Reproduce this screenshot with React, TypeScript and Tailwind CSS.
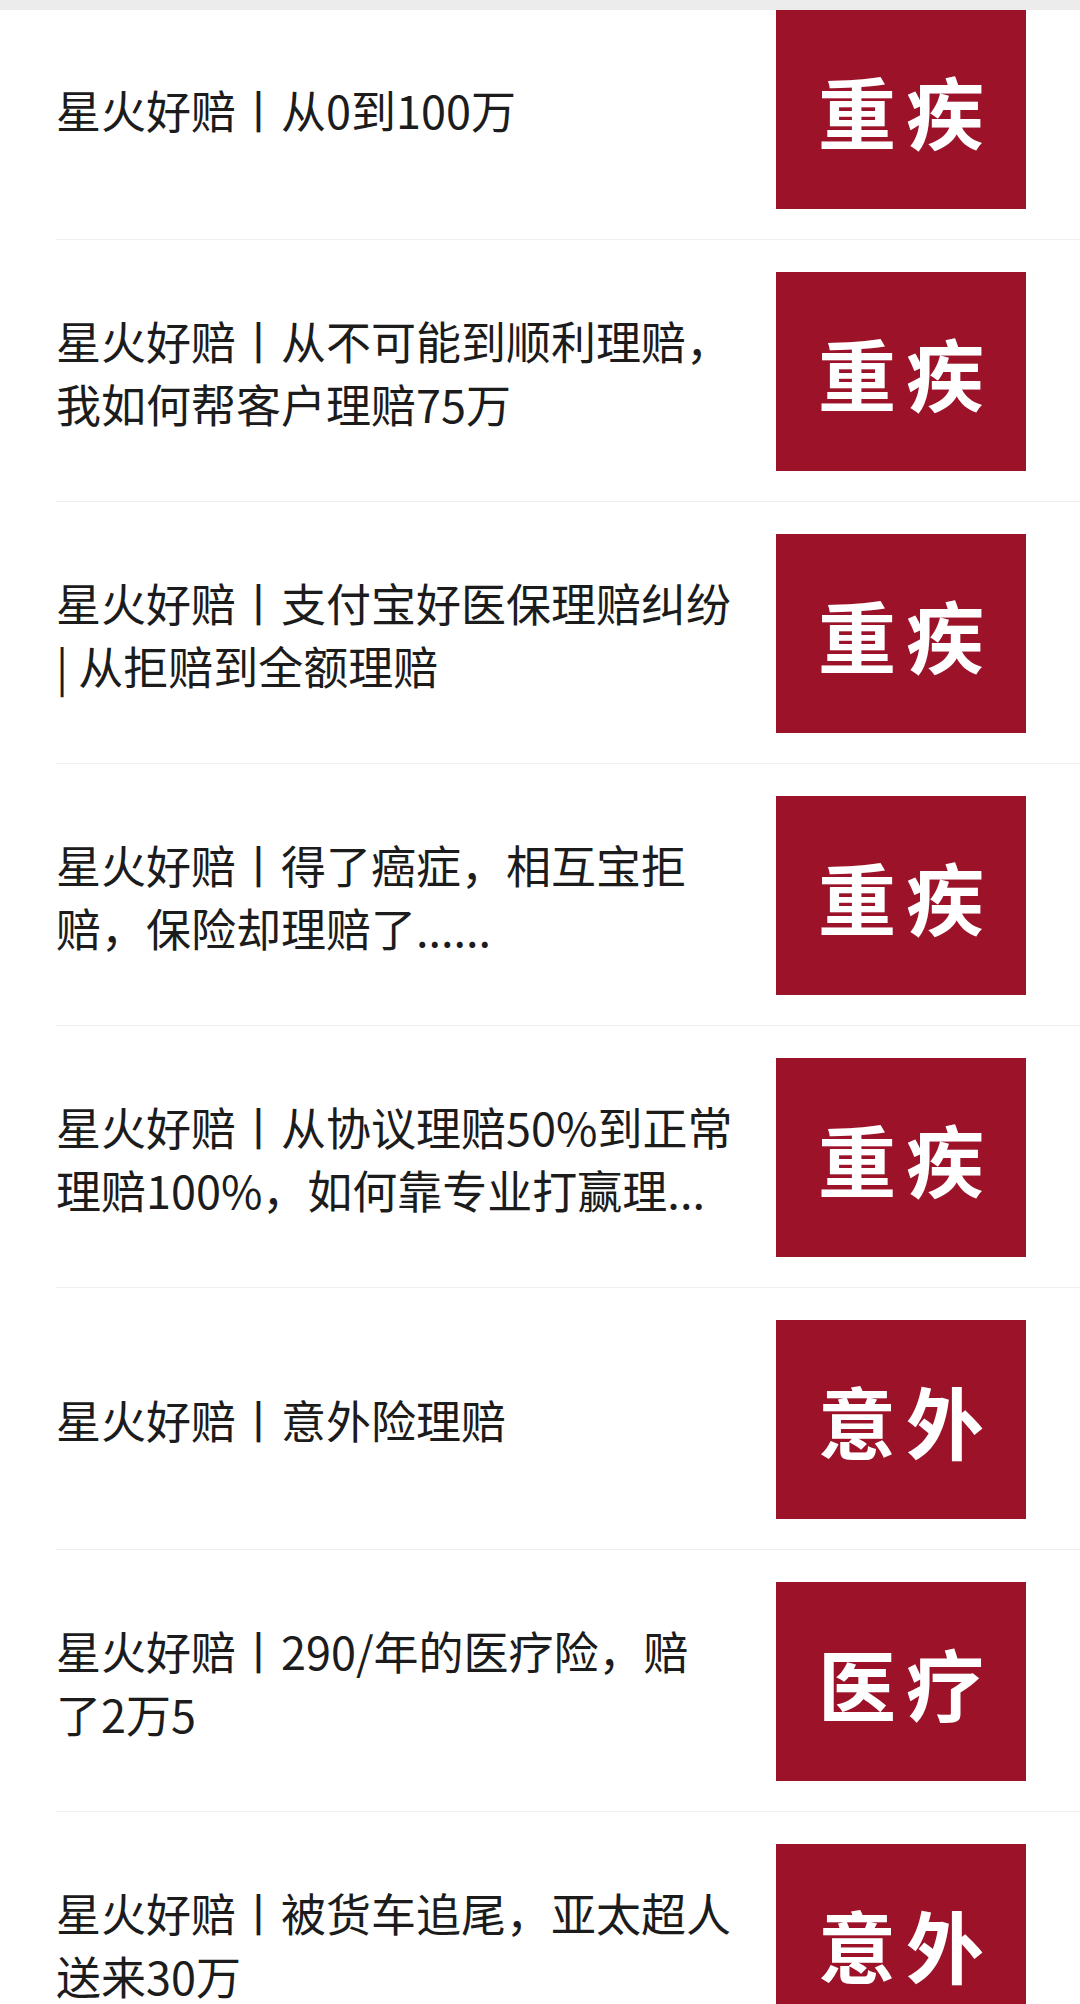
import React from 'react';

interface Article {
  id: number;
  lines: string[];
  tag: string;
}

const articles: Article[] = [
  { id: 1, lines: ['星火好赔丨从0到100万'], tag: '重疾' },
  { id: 2, lines: ['星火好赔丨从不可能到顺利理赔，', '我如何帮客户理赔75万'], tag: '重疾' },
  { id: 3, lines: ['星火好赔丨支付宝好医保理赔纠纷', '| 从拒赔到全额理赔'], tag: '重疾' },
  { id: 4, lines: ['星火好赔丨得了癌症，相互宝拒', '赔，保险却理赔了......'], tag: '重疾' },
  { id: 5, lines: ['星火好赔丨从协议理赔50%到正常', '理赔100%，如何靠专业打赢理...'], tag: '重疾' },
  { id: 6, lines: ['星火好赔丨意外险理赔'], tag: '意外' },
  { id: 7, lines: ['星火好赔丨290/年的医疗险，赔', '了2万5'], tag: '医疗' },
  { id: 8, lines: ['星火好赔丨被货车追尾，亚太超人', '送来30万'], tag: '意外' },
];

const fontStack = { fontFamily: '"Noto Sans CJK SC", "Noto Sans", sans-serif' };

const ArticleRow: React.FC<{ article: Article; first: boolean }> = ({ article, first }) => (
  <li
    className={
      first
        ? 'flex items-center border-b border-[#f0f0f0] pr-[54px] pt-0 pb-[30px]'
        : 'flex items-center border-b border-[#f0f0f0] pr-[54px] pt-[32px] pb-[30px]'
    }
  >
    <div className="flex-1 text-[45px] leading-[63px] text-[#1c1c1c]">
      {article.lines.map((line) => (
        <p key={line} className="whitespace-nowrap">
          {line}
        </p>
      ))}
    </div>
    <div className="flex h-[199px] w-[250px] shrink-0 items-center justify-center bg-[#9b1229]">
      <span className="pl-[10px] text-[78px] font-bold leading-none tracking-[10px] text-white">
        {article.tag}
      </span>
    </div>
  </li>
);

export default function App() {
  return (
    <div className="h-[2004px] w-[1080px] overflow-hidden bg-white" style={fontStack}>
      <div className="h-[10px] bg-[#ececec]" />
      <ul className="pl-[56px]">
        {articles.map((a, i) => (
          <ArticleRow key={a.id} article={a} first={i === 0} />
        ))}
      </ul>
    </div>
  );
}
